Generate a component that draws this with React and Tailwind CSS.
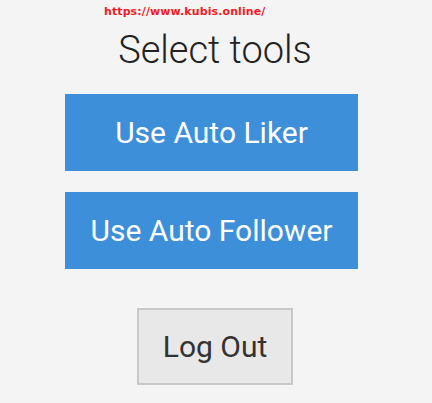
import React from 'react';

const tools = ['Use Auto Liker', 'Use Auto Follower'];

const App = () => {
  return (
    <div className="min-h-[403px] bg-[#f4f4f4] font-['Roboto',sans-serif]">
      <div className="pl-[104px] pt-[5px] h-[27px] font-['DejaVu_Sans',sans-serif] font-bold text-[11px] tracking-[0.1px] leading-[14px] text-[#ee1c25]">
        https://www.kubis.online/
      </div>

      <h1 className="text-center text-[38px] font-light leading-[46px] text-[#222] mr-[2px]">
        Select tools
      </h1>

      <div className="flex flex-col items-center gap-[21px] mt-[21px] mr-[9px]">
        {tools.map((label) => (
          <button
            key={label}
            className="w-[293px] h-[77px] bg-[#3d8fd9] text-white text-[30px] leading-none"
          >
            {label}
          </button>
        ))}
      </div>

      <div className="flex justify-center mt-[39px] mr-[2px]">
        <button className="w-[156px] h-[77px] bg-[#e8e8e8] border-2 border-[#c8c8c8] text-[#333] text-[30px] leading-none">
          Log Out
        </button>
      </div>
    </div>
  );
};

export default App;
